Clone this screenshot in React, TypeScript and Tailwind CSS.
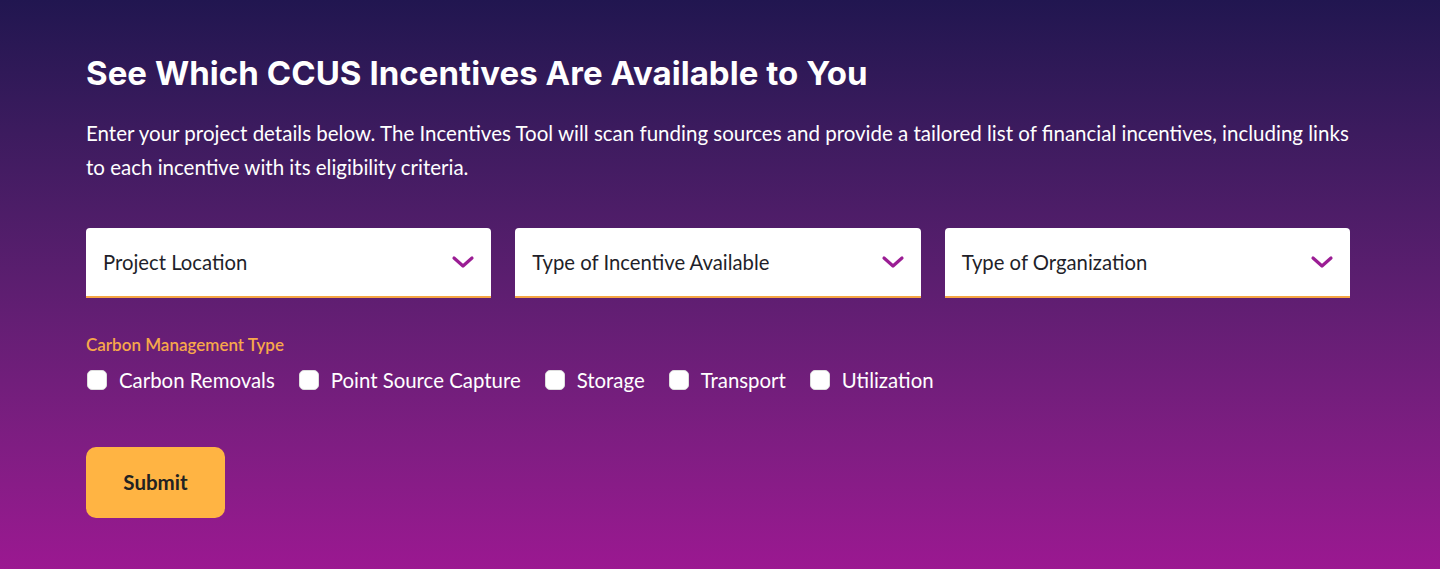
import React from "react";

const Chevron = () => (
  <svg width="24" height="16" viewBox="0 0 24 16" fill="none">
    <path d="M3 4l9 8 9-8" stroke="#9b1d94" strokeWidth="3.2" strokeLinecap="round" strokeLinejoin="round" />
  </svg>
);

const Select = ({ label }: { label: string }) => (
  <div className="flex h-[70px] flex-1 items-center justify-between rounded-t-[4px] border-b-2 border-[#f5a543] bg-white pl-[17px] pr-[16px]">
    <span className="text-[20.3px] text-[#1f1f2a]">{label}</span>
    <Chevron />
  </div>
);

const Check = ({ label }: { label: string }) => (
  <label className="flex items-center gap-[12px]">
    <span className="h-[20px] w-[20px] rounded-[5px] border border-[#ddd] bg-white" />
    <span className="text-[20.4px] text-white">{label}</span>
  </label>
);

export default function App() {
  return (
    <div
      className="h-[569px] w-full bg-gradient-to-b from-[#211650] to-[#9b1891] pl-[86px] pr-[90px] pt-[52px]"
      style={{ fontFamily: "Lato, 'Noto Sans', sans-serif" }}
    >
      <h1
        className="text-[33px] font-bold leading-[42px] tracking-[0.05px] text-white"
        style={{ fontFamily: "Inter, sans-serif" }}
      >
        See Which CCUS Incentives Are Available to You
      </h1>
      <p className="mt-[22px] text-[20.5px] leading-[34px] text-white">
        Enter your project details below. The Incentives Tool will scan funding sources and provide a tailored list of financial incentives, including links to each incentive with its eligibility criteria.
      </p>
      <div className="mt-[44px] flex gap-[24px]">
        <Select label="Project Location" />
        <Select label="Type of Incentive Available" />
        <Select label="Type of Organization" />
      </div>
      <div className="mt-[34px] text-[17px] font-semibold text-[#f7a84a]">Carbon Management Type</div>
      <div className="mt-[7px] flex gap-[24px] pl-[1px]">
        <Check label="Carbon Removals" />
        <Check label="Point Source Capture" />
        <Check label="Storage" />
        <Check label="Transport" />
        <Check label="Utilization" />
      </div>
      <button className="mt-[52px] flex h-[71px] w-[139px] items-center justify-center rounded-[10px] bg-[#ffb443] text-[20.5px] font-bold text-[#222]">
        Submit
      </button>
    </div>
  );
}
